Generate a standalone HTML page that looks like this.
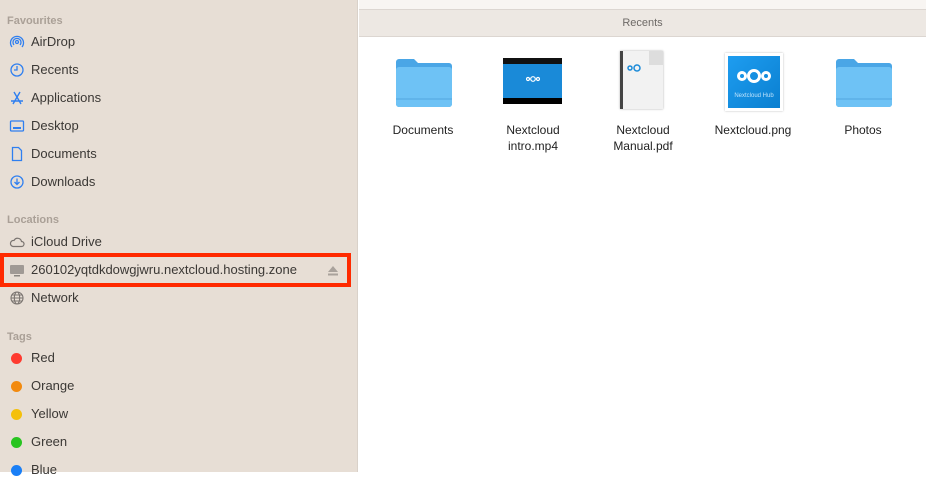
<!DOCTYPE html>
<html><head><meta charset="utf-8"><style>
*{margin:0;padding:0;box-sizing:border-box}
body{width:926px;height:472px;overflow:hidden;font-family:"Liberation Sans",sans-serif;background:#fff;position:relative}
#side{position:absolute;left:0;top:0;width:358px;height:472px;background:#e7ded5;border-right:1px solid #d9d1c9}
.h{position:absolute;left:7px;font-size:11px;font-weight:bold;color:#aaa097}
.r{position:absolute;left:31px;font-size:13px;color:#3b3835;line-height:16px}
.ic{position:absolute;left:9px;width:16px;height:16px}
.dot{position:absolute;left:11px;width:11px;height:11px;border-radius:50%}
#top{position:absolute;left:359px;top:0;right:0;height:10px;background:#f8f5f2;border-bottom:1px solid #dcd6d1}
#hdr{position:absolute;left:359px;top:10px;right:0;height:27px;background:#ede8e3;border-bottom:1px solid #dcd6d1;font-size:11px;color:#6e6a67;text-align:center;line-height:26px}
.it{position:absolute;top:50px;width:100px;text-align:center;font-size:12px;color:#222;line-height:16px}
.it .th{height:64px;margin-bottom:8px;position:relative}
</style></head><body>
<div id="side">
<div class="h" style="top:15px">Favourites</div>
<svg class="ic" style="top:34px" viewBox="0 0 16 16" fill="none" stroke="#2f7ff0" stroke-width="1.3"><circle cx="8" cy="8" r="1.5"/><path d="M5 11a4 4 0 1 1 6 0M3 13a6.5 6.5 0 1 1 10 0"/></svg>
<div class="r" style="top:34px">AirDrop</div>
<svg class="ic" style="top:62px" viewBox="0 0 16 16" fill="none" stroke="#2f7ff0" stroke-width="1.3"><circle cx="8" cy="8" r="6"/><path d="M8 4v4H5"/></svg>
<div class="r" style="top:62px">Recents</div>
<svg class="ic" style="top:90px" viewBox="0 0 16 16" fill="none" stroke="#2f7ff0" stroke-width="1.4"><path d="M5 2l7 12M11 2L4 14M2 11h12"/></svg>
<div class="r" style="top:90px">Applications</div>
<svg class="ic" style="top:118px" viewBox="0 0 16 16" fill="none" stroke="#2f7ff0" stroke-width="1.3"><rect x="1.5" y="3" width="13" height="10" rx="1"/><path d="M4 10h8" stroke-width="2"/></svg>
<div class="r" style="top:118px">Desktop</div>
<svg class="ic" style="top:146px" viewBox="0 0 16 16" fill="none" stroke="#2f7ff0" stroke-width="1.3"><path d="M3.5 1.5h6l3 3v10h-9z"/></svg>
<div class="r" style="top:146px">Documents</div>
<svg class="ic" style="top:174px" viewBox="0 0 16 16" fill="none" stroke="#2f7ff0" stroke-width="1.3"><circle cx="8" cy="8" r="6"/><path d="M8 4.5v6M5.5 8l2.5 2.5L10.5 8"/></svg>
<div class="r" style="top:174px">Downloads</div>
<div class="h" style="top:214px">Locations</div>
<svg class="ic" style="top:234px" viewBox="0 0 16 16" fill="none" stroke="#7a7470" stroke-width="1.2"><path d="M4 12.5h8.5a2.5 2.5 0 0 0 0-5 4 4 0 0 0-7.5-1A3 3 0 0 0 4 12.5z"/></svg>
<div class="r" style="top:234px">iCloud Drive</div>
<svg class="ic" style="top:262px" viewBox="0 0 16 16"><rect x="1" y="3" width="14" height="9" rx="1" fill="#a09a95"/><rect x="5" y="13" width="6" height="1.5" fill="#8a8580"/></svg>
<div class="r" style="top:262px">260102yqtdkdowgjwru.nextcloud.hosting.zone</div>
<svg style="position:absolute;left:327px;top:265px" width="12" height="11" viewBox="0 0 12 11"><path d="M6 1l5 6H1z" fill="#a9a29c"/><rect x="1" y="8.5" width="10" height="2" fill="#a9a29c"/></svg>
<div style="position:absolute;left:0;top:253px;width:351px;height:34px;border:4px solid #ff2a00"></div>
<svg class="ic" style="top:290px" viewBox="0 0 16 16" fill="none" stroke="#7a7470" stroke-width="1.1"><circle cx="8" cy="8" r="6"/><ellipse cx="8" cy="8" rx="2.7" ry="6"/><path d="M2 8h12M3 5h10M3 11h10"/></svg>
<div class="r" style="top:290px">Network</div>
<div class="h" style="top:331px">Tags</div>
<div class="dot" style="top:353px;background:#fe3b30"></div><div class="r" style="top:350px">Red</div>
<div class="dot" style="top:381px;background:#f28a0f"></div><div class="r" style="top:378px">Orange</div>
<div class="dot" style="top:409px;background:#f4c00b"></div><div class="r" style="top:406px">Yellow</div>
<div class="dot" style="top:437px;background:#28c420"></div><div class="r" style="top:434px">Green</div>
<div class="dot" style="top:465px;background:#1a7ff6"></div><div class="r" style="top:462px">Blue</div>
</div>
<div id="top"></div>
<div id="hdr">Recents</div>

<div class="it" style="left:373px"><div class="th"><svg style="position:absolute;left:21px;top:6px" width="60" height="52" viewBox="0 0 60 52"><path d="M2 6a3 3 0 0 1 3-3h15l4 4h31a3 3 0 0 1 3 3v38a3 3 0 0 1-3 3H5a3 3 0 0 1-3-3z" fill="#4aa6e6"/><rect x="2" y="11" width="56" height="40" rx="3" fill="#6ec2f5"/><rect x="2" y="42" width="56" height="2" fill="#60b4ea"/></svg></div>Documents</div>

<div class="it" style="left:483px"><div class="th"><div style="position:absolute;left:20px;top:8px;width:59px;height:46px;background:#1a8ad8;border-top:6px solid #111;border-bottom:6px solid #000"></div><svg style="position:absolute;left:43px;top:26px" width="14" height="6" viewBox="0 0 14 6" fill="none" stroke="#fff" stroke-width="1.2"><circle cx="2" cy="3" r="1.5"/><circle cx="7" cy="3" r="2.3"/><circle cx="12" cy="3" r="1.5"/></svg></div>Nextcloud<br>intro.mp4</div>

<div class="it" style="left:593px"><div class="th"><div style="position:absolute;left:27px;top:1px;width:43px;height:58px;background:#f2f2f2;border-left:3px solid #444;box-shadow:0 0 2px #aaa"></div><div style="position:absolute;left:56px;top:1px;width:14px;height:14px;background:#ddd"></div><svg style="position:absolute;left:34px;top:14px" width="18" height="8" viewBox="0 0 18 8" fill="none" stroke="#1a8ad8" stroke-width="1.5"><circle cx="3" cy="4" r="2"/><circle cx="10" cy="4" r="3"/></svg></div>Nextcloud<br>Manual.pdf</div>

<div class="it" style="left:703px"><div class="th"><div style="position:absolute;left:22px;top:3px;width:58px;height:58px;background:#fff;box-shadow:0 0 2px #bbb"></div><div style="position:absolute;left:25px;top:6px;width:52px;height:52px;background:linear-gradient(135deg,#1e9df0,#0a7fd0)"></div><svg style="position:absolute;left:33px;top:18px" width="36" height="16" viewBox="0 0 36 16" fill="none" stroke="#fff" stroke-width="3"><circle cx="6" cy="8" r="3.5"/><circle cx="18" cy="8" r="5.5"/><circle cx="30" cy="8" r="3.5"/></svg><div style="position:absolute;left:25px;top:38px;width:52px;font-size:6px;color:#bfe3fb">Nextcloud Hub</div></div>Nextcloud.png</div>

<div class="it" style="left:813px"><div class="th"><svg style="position:absolute;left:21px;top:6px" width="60" height="52" viewBox="0 0 60 52"><path d="M2 6a3 3 0 0 1 3-3h15l4 4h31a3 3 0 0 1 3 3v38a3 3 0 0 1-3 3H5a3 3 0 0 1-3-3z" fill="#4aa6e6"/><rect x="2" y="11" width="56" height="40" rx="3" fill="#6ec2f5"/><rect x="2" y="42" width="56" height="2" fill="#60b4ea"/></svg></div>Photos</div>
</body></html>
